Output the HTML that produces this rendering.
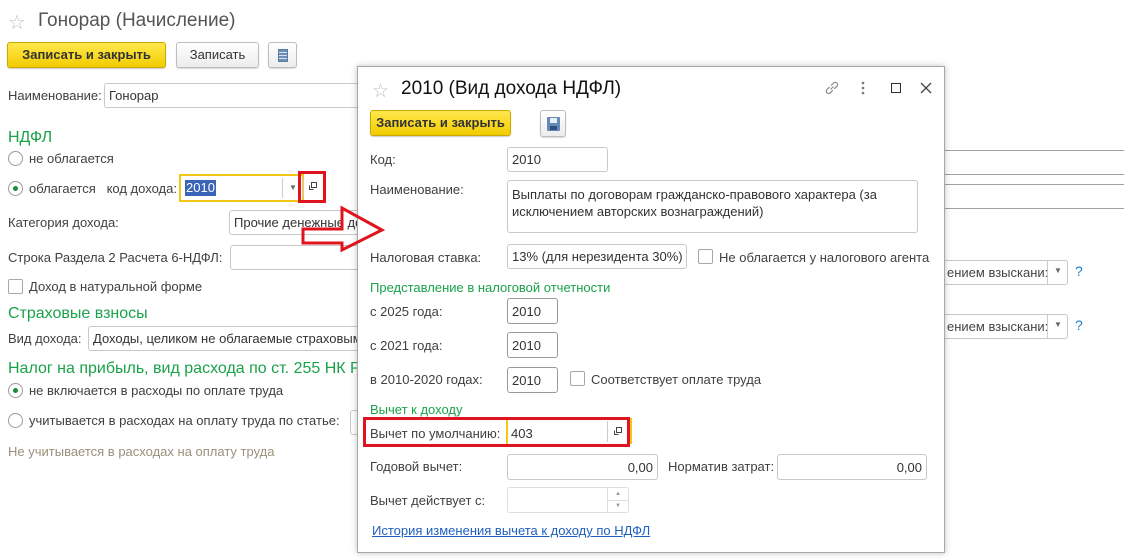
<!DOCTYPE html>
<html><head><meta charset="utf-8"><style>
*{box-sizing:border-box;margin:0;padding:0}
body{width:1124px;height:560px;background:#fff;font-family:"Liberation Sans",Arial,sans-serif;font-size:13px;color:#404040;position:relative;overflow:hidden}
.a{position:absolute;white-space:nowrap}
.in{position:absolute;border:1px solid #c8c8c8;border-radius:3px;background:#fff;padding:0 4px;color:#333;overflow:hidden;white-space:nowrap;display:flex;align-items:center}
.r{justify-content:flex-end}
.ybtn{position:absolute;background:linear-gradient(#ffe84d,#f2cc00);border:1px solid #c9a800;border-radius:3px;font-weight:bold;color:#333;text-align:center;font-size:13px;box-shadow:0 1px 1px rgba(0,0,0,.2)}
.btn{position:absolute;background:linear-gradient(#fff,#ececec);border:1px solid #bdbdbd;border-radius:3px;text-align:center;color:#333;box-shadow:0 1px 1px rgba(0,0,0,.15)}
.g{color:#1aa24a}
.rad{position:absolute;width:15px;height:15px;border:1px solid #9a9a9a;border-radius:50%;background:#fff}
.rad.on::after{content:"";position:absolute;left:4px;top:4px;width:5px;height:5px;border-radius:50%;background:#1c8a3c}
.cb{position:absolute;width:15px;height:15px;border:1px solid #a8a8a8;border-radius:2px;background:#fff}
.line{position:absolute;left:945px;right:0;height:1px;background:#a0a0a0}
</style></head><body>
<!-- main form -->
<div class="a" style="left:8px;top:10px;font-size:20px;color:#c0c0c0">☆</div>
<div class="a" style="left:38px;top:10px;font-size:19px;color:#555">Гонорар (Начисление)</div>
<div class="ybtn" style="left:7px;top:42px;width:159px;height:26px;line-height:24px">Записать и закрыть</div>
<div class="btn" style="left:176px;top:42px;width:83px;height:26px;line-height:24px">Записать</div>
<div class="btn" style="left:268px;top:42px;width:29px;height:26px"><div style="position:absolute;left:9px;top:6px;width:10px;height:13px;background:repeating-linear-gradient(#6d8fb6 0 2px,#d8e2ee 2px 3px);border:1px solid #5a7aa0"></div></div>
<div class="a" style="left:8px;top:88px">Наименование:</div>
<div class="in" style="left:104px;top:83px;width:300px;height:25px">Гонорар</div>
<div class="a g" style="left:8px;top:129px;font-size:16px">НДФЛ</div>
<div class="rad" style="left:8px;top:151px"></div><div class="a" style="left:29px;top:151px">не облагается</div>
<div class="rad on" style="left:8px;top:181px"></div><div class="a" style="left:29px;top:181px">облагается&nbsp;&nbsp;&nbsp;код дохода:</div>
<div class="a" style="left:179px;top:174px;width:125px;height:28px;border:2px solid #f5c518;background:#fff"></div>
<div class="a" style="left:185px;top:180px;background:#3a64b8;color:#fff;line-height:16px;padding:0 1px">2010</div>
<div class="a" style="left:282px;top:178px;width:1px;height:20px;background:#ccc"></div>
<div class="a" style="left:289px;top:183px;font-size:8px;color:#666">▼</div>
<div class="a" style="left:303px;top:178px;width:1px;height:20px;background:#ccc"></div>
<div class="a" style="left:298px;top:171px;width:28px;height:32px;border:3px solid #e0141e"></div>
<svg class="a" style="left:308px;top:181px" width="10" height="10"><rect x="3.5" y="1.5" width="5" height="5" fill="none" stroke="#444"/><path d="M1.5 4.5v4h4" fill="none" stroke="#444"/></svg>
<div class="a" style="left:8px;top:215px">Категория дохода:</div>
<div class="in" style="left:229px;top:210px;width:200px;height:25px">Прочие денежные доходы</div>
<div class="a" style="left:8px;top:250px">Строка Раздела 2 Расчета 6-НДФЛ:</div>
<div class="in" style="left:230px;top:245px;width:200px;height:25px"></div>
<div class="cb" style="left:8px;top:279px"></div><div class="a" style="left:29px;top:279px">Доход в натуральной форме</div>
<div class="a g" style="left:8px;top:305px;font-size:16px">Страховые взносы</div>
<div class="a" style="left:8px;top:331px">Вид дохода:</div>
<div class="in" style="left:88px;top:326px;width:330px;height:25px">Доходы, целиком не облагаемые страховыми взносами</div>
<div class="a g" style="left:8px;top:360px;font-size:16px">Налог на прибыль, вид расхода по ст. 255 НК РФ</div>
<div class="rad on" style="left:8px;top:383px"></div><div class="a" style="left:29px;top:383px">не включается в расходы по оплате труда</div>
<div class="rad" style="left:8px;top:413px"></div><div class="a" style="left:29px;top:413px">учитывается в расходах на оплату труда по статье:</div>
<div class="in" style="left:350px;top:410px;width:60px;height:25px"></div>
<div class="a" style="left:8px;top:444px;color:#9b8f7b">Не учитывается в расходах на оплату труда</div>
<!-- right side behind dialog -->
<div class="line" style="top:150px"></div><div class="line" style="top:174px"></div>
<div class="line" style="top:184px"></div><div class="line" style="top:208px"></div>
<div class="in" style="left:900px;top:260px;width:168px;height:25px;padding-left:46px;color:#444">ением взыскани:</div>
<div class="a" style="left:1047px;top:261px;width:1px;height:23px;background:#ccc"></div>
<div class="a" style="left:1054px;top:266px;font-size:8px;color:#666">▼</div>
<div class="a" style="left:1075px;top:263px;color:#1b7fd0;font-size:14px">?</div>
<div class="in" style="left:900px;top:314px;width:168px;height:25px;padding-left:46px;color:#444">ением взыскани:</div>
<div class="a" style="left:1047px;top:315px;width:1px;height:23px;background:#ccc"></div>
<div class="a" style="left:1054px;top:320px;font-size:8px;color:#666">▼</div>
<div class="a" style="left:1075px;top:317px;color:#1b7fd0;font-size:14px">?</div>
<!-- dialog -->
<div class="a" style="left:357px;top:66px;width:588px;height:487px;background:#fff;border:1px solid #a8a8a8;box-shadow:0 0 6px rgba(0,0,0,.25)">
<div class="a" style="left:14px;top:13px;font-size:19px;color:#c0c0c0">☆</div>
<div class="a" style="left:43px;top:11px;font-size:19px;color:#111">2010 (Вид дохода НДФЛ)</div>
<svg class="a" style="left:465px;top:12px" width="18" height="18"><path d="M7.5 10.5l3-3M6.5 8L4 10.5a2.3 2.3 0 0 0 3.3 3.3L9.8 11.3M11.3 9.8l2.5-2.5a2.3 2.3 0 0 0-3.3-3.3L8 6.5" fill="none" stroke="#888" stroke-width="1.2"/></svg>
<svg class="a" style="left:502px;top:14px" width="6" height="14"><circle cx="3" cy="2" r="1.3" fill="#777"/><circle cx="3" cy="7" r="1.3" fill="#777"/><circle cx="3" cy="12" r="1.3" fill="#777"/></svg>
<div class="a" style="left:533px;top:16px;width:10px;height:10px;border:1.5px solid #333"></div>
<svg class="a" style="left:561px;top:14px" width="14" height="14"><path d="M2 2L12 12M12 2L2 12" stroke="#444" stroke-width="1.3"/></svg>
<div class="ybtn" style="left:12px;top:43px;width:141px;height:26px;line-height:24px">Записать и закрыть</div>
<div class="btn" style="left:182px;top:43px;width:26px;height:27px"><div style="position:absolute;left:6px;top:6px;width:13px;height:14px;background:#6489b8;border-radius:1px"><div style="position:absolute;left:3px;top:1px;width:7px;height:5px;background:#e8eef6"></div><div style="position:absolute;left:3px;top:9px;width:7px;height:4px;background:#2f4f7a"></div></div></div>
<div class="a" style="left:12px;top:85px">Код:</div>
<div class="in" style="left:149px;top:80px;width:101px;height:25px">2010</div>
<div class="a" style="left:12px;top:115px">Наименование:</div>
<div class="in" style="left:149px;top:113px;width:411px;height:53px;white-space:normal;line-height:17px;padding-top:5px;display:block">Выплаты по договорам гражданско-правового характера (за исключением авторских вознаграждений)</div>
<div class="a" style="left:12px;top:183px">Налоговая ставка:</div>
<div class="in" style="left:149px;top:177px;width:180px;height:25px">13% (для нерезидента 30%)</div>
<div class="cb" style="left:340px;top:182px"></div><div class="a" style="left:361px;top:183px">Не облагается у налогового агента</div>
<div class="a g" style="left:12px;top:213px">Представление в налоговой отчетности</div>
<div class="a" style="left:12px;top:237px">с 2025 года:</div>
<div class="in" style="left:149px;top:231px;width:51px;height:26px;border-color:#9a9a9a">2010</div>
<div class="a" style="left:12px;top:271px">с 2021 года:</div>
<div class="in" style="left:149px;top:265px;width:51px;height:26px;border-color:#9a9a9a">2010</div>
<div class="a" style="left:12px;top:305px">в 2010-2020 годах:</div>
<div class="in" style="left:149px;top:300px;width:51px;height:26px;border-color:#9a9a9a">2010</div>
<div class="cb" style="left:212px;top:304px"></div><div class="a" style="left:233px;top:305px">Соответствует оплате труда</div>
<div class="a g" style="left:12px;top:335px">Вычет к доходу</div>
<div class="a" style="left:148px;top:351px;width:126px;height:26px;border-left:2px solid #f5c518;border-right:2px solid #f5c518"></div>
<div class="a" style="left:5px;top:350px;width:267px;height:30px;border:3px solid #e0141e"></div>
<div class="a" style="left:12px;top:359px">Вычет по умолчанию:</div>
<div class="a" style="left:153px;top:359px;color:#333">403</div>
<div class="a" style="left:249px;top:354px;width:1px;height:21px;background:#ccc"></div>
<svg class="a" style="left:255px;top:359px" width="10" height="10"><rect x="3.5" y="1.5" width="5" height="5" fill="none" stroke="#444"/><path d="M1.5 4.5v4h4" fill="none" stroke="#444"/></svg>
<div class="a" style="left:12px;top:392px">Годовой вычет:</div>
<div class="in r" style="left:149px;top:387px;width:151px;height:26px">0,00</div>
<div class="a" style="left:310px;top:392px">Норматив затрат:</div>
<div class="in r" style="left:419px;top:387px;width:150px;height:26px">0,00</div>
<div class="a" style="left:12px;top:426px">Вычет действует с:</div>
<div class="in" style="left:149px;top:420px;width:122px;height:26px;border-color:#ddd"></div>
<div class="a" style="left:249px;top:421px;width:1px;height:24px;background:#ddd"></div>
<div class="a" style="left:250px;top:433px;width:20px;height:1px;background:#ddd"></div>
<div class="a" style="left:257px;top:424px;font-size:6px;color:#999">▲</div>
<div class="a" style="left:257px;top:436px;font-size:6px;color:#999">▼</div>
<div class="a" style="left:14px;top:456px;color:#1f5fbf;text-decoration:underline">История изменения вычета к доходу по НДФЛ</div>
</div>
<!-- arrow -->
<svg class="a" style="left:0;top:0" width="1124" height="560"><path d="M303 229H342V208L382 230L342 250V243H303Z" fill="none" stroke="#e0141e" stroke-width="3"/></svg>
</body></html>
